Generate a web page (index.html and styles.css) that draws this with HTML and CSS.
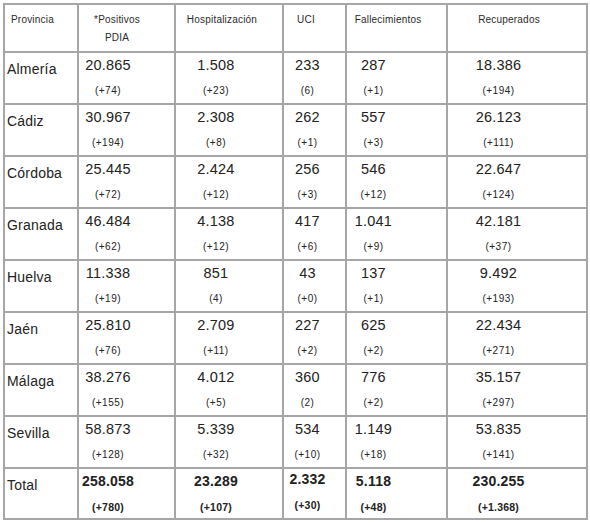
FILE: index.html
```html
<!DOCTYPE html>
<html lang="es">
<head>
<meta charset="utf-8">
<title>Datos por provincia</title>
<link rel="stylesheet" href="styles.css">
</head>
<body>
<table class="tbl">
  <colgroup>
    <col class="c1"><col class="c2"><col class="c3"><col class="c4"><col class="c5"><col class="c6">
  </colgroup>
  <thead>
    <tr class="head">
      <th class="h1">Provincia</th>
      <th class="h2">*Positivos<br>PDIA</th>
      <th class="h3">Hospitalización</th>
      <th class="h4">UCI</th>
      <th class="h5">Fallecimientos</th>
      <th class="h6">Recuperados</th>
    </tr>
  </thead>
  <tbody>
    <tr class="row"><td class="prov">Almería</td><td class="d2"><div class="big">20.865</div><div class="small">(+74)</div></td><td class="d3"><div class="big">1.508</div><div class="small">(+23)</div></td><td class="d4"><div class="big">233</div><div class="small">(6)</div></td><td class="d5"><div class="big">287</div><div class="small">(+1)</div></td><td class="d6"><div class="big">18.386</div><div class="small">(+194)</div></td></tr>
    <tr class="row"><td class="prov">Cádiz</td><td class="d2"><div class="big">30.967</div><div class="small">(+194)</div></td><td class="d3"><div class="big">2.308</div><div class="small">(+8)</div></td><td class="d4"><div class="big">262</div><div class="small">(+1)</div></td><td class="d5"><div class="big">557</div><div class="small">(+3)</div></td><td class="d6"><div class="big">26.123</div><div class="small">(+111)</div></td></tr>
    <tr class="row"><td class="prov">Córdoba</td><td class="d2"><div class="big">25.445</div><div class="small">(+72)</div></td><td class="d3"><div class="big">2.424</div><div class="small">(+12)</div></td><td class="d4"><div class="big">256</div><div class="small">(+3)</div></td><td class="d5"><div class="big">546</div><div class="small">(+12)</div></td><td class="d6"><div class="big">22.647</div><div class="small">(+124)</div></td></tr>
    <tr class="row"><td class="prov">Granada</td><td class="d2"><div class="big">46.484</div><div class="small">(+62)</div></td><td class="d3"><div class="big">4.138</div><div class="small">(+12)</div></td><td class="d4"><div class="big">417</div><div class="small">(+6)</div></td><td class="d5"><div class="big">1.041</div><div class="small">(+9)</div></td><td class="d6"><div class="big">42.181</div><div class="small">(+37)</div></td></tr>
    <tr class="row"><td class="prov">Huelva</td><td class="d2"><div class="big">11.338</div><div class="small">(+19)</div></td><td class="d3"><div class="big">851</div><div class="small">(4)</div></td><td class="d4"><div class="big">43</div><div class="small">(+0)</div></td><td class="d5"><div class="big">137</div><div class="small">(+1)</div></td><td class="d6"><div class="big">9.492</div><div class="small">(+193)</div></td></tr>
    <tr class="row"><td class="prov">Jaén</td><td class="d2"><div class="big">25.810</div><div class="small">(+76)</div></td><td class="d3"><div class="big">2.709</div><div class="small">(+11)</div></td><td class="d4"><div class="big">227</div><div class="small">(+2)</div></td><td class="d5"><div class="big">625</div><div class="small">(+2)</div></td><td class="d6"><div class="big">22.434</div><div class="small">(+271)</div></td></tr>
    <tr class="row"><td class="prov">Málaga</td><td class="d2"><div class="big">38.276</div><div class="small">(+155)</div></td><td class="d3"><div class="big">4.012</div><div class="small">(+5)</div></td><td class="d4"><div class="big">360</div><div class="small">(2)</div></td><td class="d5"><div class="big">776</div><div class="small">(+2)</div></td><td class="d6"><div class="big">35.157</div><div class="small">(+297)</div></td></tr>
    <tr class="row"><td class="prov">Sevilla</td><td class="d2"><div class="big">58.873</div><div class="small">(+128)</div></td><td class="d3"><div class="big">5.339</div><div class="small">(+32)</div></td><td class="d4"><div class="big">534</div><div class="small">(+10)</div></td><td class="d5"><div class="big">1.149</div><div class="small">(+18)</div></td><td class="d6"><div class="big">53.835</div><div class="small">(+141)</div></td></tr>
    <tr class="row total"><td class="prov">Total</td><td class="d2"><div class="big">258.058</div><div class="small">(+780)</div></td><td class="d3"><div class="big">23.289</div><div class="small">(+107)</div></td><td class="d4"><div class="big up">2.332</div><div class="small">(+30)</div></td><td class="d5"><div class="big">5.118</div><div class="small">(+48)</div></td><td class="d6"><div class="big">230.255</div><div class="small">(+1.368)</div></td></tr>
  </tbody>
</table>
</body>
</html>
```
FILE: styles.css
```css
html, body {
  margin: 0;
  padding: 0;
  background: #ffffff;
}
body {
  padding: 3px 0 0 3px;
  font-family: "Liberation Sans", Arial, sans-serif;
  color: #222222;
}
.tbl {
  border-collapse: collapse;
  table-layout: fixed;
  width: 583px;
}
.c1 { width: 74px; }
.c2 { width: 97px; }
.c3 { width: 108px; }
.c4 { width: 63px; }
.c5 { width: 101px; }
.c6 { width: 140px; }

.tbl th, .tbl td {
  border: 2px solid #a6a6a6;
  vertical-align: top;
  padding: 0;
  box-sizing: border-box;
}
.head { height: 48px; }
.row { height: 52px; }
.total { height: 51px; }

.tbl th {
  font-weight: normal;
  font-size: 10px;
  letter-spacing: 0.2px;
  line-height: 18px;
  padding-top: 6px;
  text-align: center;
  color: #2a2a2a;
}
.tbl th.h1 { text-align: left; padding-left: 6px; }
.tbl th.h2 { padding-right: 19px; }
.tbl th.h3 { padding-right: 14px; }
.tbl th.h4 { padding-right: 17px; }
.tbl th.h5 { padding-right: 17px; }
.tbl th.h6 { padding-right: 16px; }

.tbl td.prov {
  font-size: 14px;
  line-height: 18px;
  padding: 7px 0 0 2px;
  letter-spacing: 0.2px;
}
.tbl td.d2, .tbl td.d3, .tbl td.d4, .tbl td.d5, .tbl td.d6 {
  text-align: center;
  padding-top: 3px;
}
.tbl td.d2 { padding-right: 37px; }
.tbl td.d3 { padding-right: 26px; }
.tbl td.d4 { padding-right: 14px; }
.tbl td.d5 { padding-right: 46px; }
.tbl td.d6 { padding-right: 37px; }

.big {
  font-size: 14.5px;
  line-height: 18px;
  letter-spacing: 0.2px;
}
.small {
  font-size: 10px;
  line-height: 14px;
  letter-spacing: 0.5px;
  margin-top: 10px;
}
.total .d2, .total .d3, .total .d4, .total .d5, .total .d6 {
  font-weight: bold;
}
.total .big { font-size: 14px; }
.total .small { font-size: 10.5px; letter-spacing: 0.2px; }
.total .big.up { margin-top: -2px; margin-bottom: 2px; }
```
